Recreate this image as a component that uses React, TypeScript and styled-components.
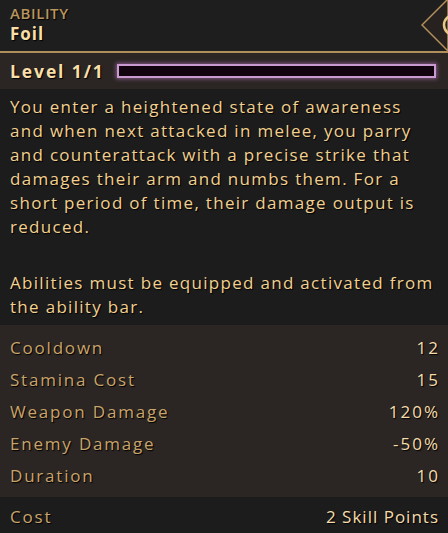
import * as React from "react";
import styled, { createGlobalStyle } from "styled-components";

const GlobalStyle = createGlobalStyle`
  html, body {
    margin: 0;
    padding: 0;
    background: #1c1c1c;
  }
  body {
    font-family: "Open Sans", "Lato", sans-serif;
    letter-spacing: 1px;
  }
`;

const Panel = styled.div`
  width: 448px;
  height: 533px;
  overflow: hidden;
  display: flex;
  flex-direction: column;
  text-shadow: 1px 1px 1px #000;
`;

const Header = styled.header`
  position: relative;
  height: 53px;
  box-sizing: border-box;
  padding: 4px 10px 0;
  background: #1e1e1e;
  border-bottom: 2px solid #b08f5a;
`;

const Kind = styled.div`
  font-size: 15px;
  line-height: 19px;
  font-weight: 600;
  color: #b8955e;
  letter-spacing: 0.6px;
`;

const Title = styled.div`
  font-size: 17px;
  line-height: 22px;
  font-weight: 700;
  color: #f8dfa8;
`;

const CloseBadge = styled.svg`
  position: absolute;
  right: 0;
  top: 0;
`;

const LevelRow = styled.div`
  display: flex;
  align-items: center;
  gap: 12px;
  height: 36px;
  padding: 0 12px 0 10px;
  background: #2b2623;
`;

const LevelLabel = styled.span`
  font-size: 17.5px;
  font-weight: 700;
  color: #f8dfa8;
  letter-spacing: 1.9px;
  white-space: nowrap;
`;

const Bar = styled.div`
  flex: 1;
  height: 10px;
  background: #12040e;
  border: 2px solid #c89ad0;
  box-shadow: 0 0 4px 1px rgba(190, 120, 200, 0.6);
`;

const Description = styled.div`
  padding: 6px 10px 0;
  height: 236px;
  box-sizing: border-box;
  background: #1c1c1c;
  color: #f2d08f;
  font-size: 17px;
  line-height: 24px;
  letter-spacing: 1.3px;
`;

const Para = styled.p`
  margin: 0 0 32px;
`;

const Stats = styled.div`
  display: flex;
  flex-direction: column;
  padding: 6px 10px 6px;
  background: #2b2623;
`;

const StatRow = styled.div`
  display: flex;
  justify-content: space-between;
  height: 32px;
  align-items: center;
  font-size: 17px;
`;

const StatLabel = styled.span`
  color: #c9a46a;
  letter-spacing: 1.8px;
`;

const StatValue = styled.span<{ $spacing?: number }>`
  color: #f5dcaa;
  letter-spacing: ${(p) => p.$spacing ?? 2}px;
  margin-right: -${(p) => p.$spacing ?? 2}px;
`;

const CostRow = styled(StatRow)`
  flex: 1;
  padding: 2px 10px 0;
  background: #1c1c1c;
`;

const stats: [string, string][] = [
  ["Cooldown", "12"],
  ["Stamina Cost", "15"],
  ["Weapon Damage", "120%"],
  ["Enemy Damage", "-50%"],
  ["Duration", "10"],
];

export default function App() {
  return (
    <>
      <GlobalStyle />
      <Panel>
        <Header>
          <Kind>ABILITY</Kind>
          <Title>Foil</Title>
          <CloseBadge width="28" height="51" viewBox="0 0 28 51">
            <path d="M28 -1 L2 25 L28 51 Z" fill="#27221f" stroke="#b08f5a" strokeWidth="1.5" />
            <circle cx="34" cy="25" r="10" fill="none" stroke="#e8c88a" strokeWidth="2.5" />
          </CloseBadge>
        </Header>
        <LevelRow>
          <LevelLabel>Level 1/1</LevelLabel>
          <Bar />
        </LevelRow>
        <Description>
          <Para>
            You enter a heightened state of awareness and when next attacked in melee, you parry
            and counterattack with a precise strike that damages their arm and numbs them. For a
            short period of time, their damage output is reduced.
          </Para>
          <Para>Abilities must be equipped and activated from the ability bar.</Para>
        </Description>
        <Stats>
          {stats.map(([label, value]) => (
            <StatRow key={label}>
              <StatLabel>{label}</StatLabel>
              <StatValue>{value}</StatValue>
            </StatRow>
          ))}
        </Stats>
        <CostRow>
          <StatLabel>Cost</StatLabel>
          <StatValue $spacing={1}>2 Skill Points</StatValue>
        </CostRow>
      </Panel>
    </>
  );
}
